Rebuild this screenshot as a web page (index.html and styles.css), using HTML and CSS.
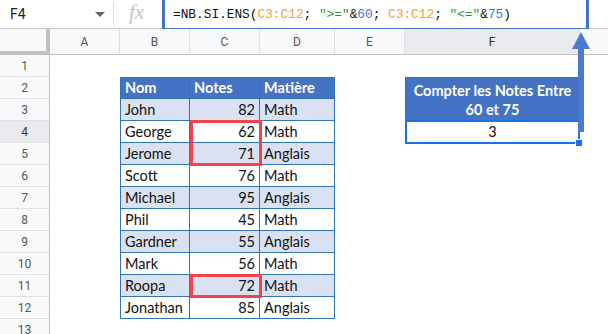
FILE: index.html
```html
<!DOCTYPE html>
<html lang="fr">
<head>
  <meta charset="UTF-8" />
  <meta name="viewport" content="width=device-width, initial-scale=1.0" />
  <title>NB.SI.ENS entre deux valeurs</title>
  <link rel="stylesheet" href="styles.css">
</head>
<body>
  <div class="app">
    <div class="formula-bar">
      <div class="name-box"><span>F4</span><span class="caret"></span></div>
      <div class="fx">fx</div>
      <div class="formula">=NB.SI.ENS(<span class="rng">C3:C12</span>; <span class="str">"&gt;="</span>&amp;<span class="num">60</span>; <span class="rng">C3:C12</span>; <span class="str">"&lt;="</span>&amp;<span class="num">75</span>)</div>
    </div>
    <div class="formula-mark"></div>

    <div class="sheet">
      <div class="corner"></div>
      <div class="col-hd">A</div>
      <div class="col-hd">B</div>
      <div class="col-hd">C</div>
      <div class="col-hd">D</div>
      <div class="col-hd">E</div>
      <div class="col-hd active">F</div>
      <div class="col-hd last"></div>

      <!-- 1 -->
      <div class="row-hd">1</div>
      <div></div><div></div><div></div><div></div><div></div><div></div><div></div>

      <!-- 2 -->
      <div class="row-hd">2</div>
      <div></div>
      <div class="cell th first top">Nom</div>
      <div class="cell th top">Notes</div>
      <div class="cell th top">Matière</div>
      <div></div>
      <div class="cell th big first top">Compter les Notes Entre<br>60 et 75</div>
      <div></div>

      <!-- 3 -->
      <div class="row-hd">3</div>
      <div></div>
      <div class="cell band first">John</div>
      <div class="cell band num">82</div>
      <div class="cell band">Math</div>
      <div></div>
      <div></div>

      <!-- 4 -->
      <div class="row-hd active">4</div>
      <div></div>
      <div class="cell first">George</div>
      <div class="cell num">62</div>
      <div class="cell">Math</div>
      <div></div>
      <div class="cell result first">3</div>
      <div></div>

      <!-- 5 -->
      <div class="row-hd">5</div>
      <div></div>
      <div class="cell band first">Jerome</div>
      <div class="cell band num">71</div>
      <div class="cell band">Anglais</div>
      <div></div><div></div><div></div>

      <!-- 6 -->
      <div class="row-hd">6</div>
      <div></div>
      <div class="cell first">Scott</div>
      <div class="cell num">76</div>
      <div class="cell">Math</div>
      <div></div><div></div><div></div>

      <!-- 7 -->
      <div class="row-hd">7</div>
      <div></div>
      <div class="cell band first">Michael</div>
      <div class="cell band num">95</div>
      <div class="cell band">Anglais</div>
      <div></div><div></div><div></div>

      <!-- 8 -->
      <div class="row-hd">8</div>
      <div></div>
      <div class="cell first">Phil</div>
      <div class="cell num">45</div>
      <div class="cell">Math</div>
      <div></div><div></div><div></div>

      <!-- 9 -->
      <div class="row-hd">9</div>
      <div></div>
      <div class="cell band first">Gardner</div>
      <div class="cell band num">55</div>
      <div class="cell band">Anglais</div>
      <div></div><div></div><div></div>

      <!-- 10 -->
      <div class="row-hd">10</div>
      <div></div>
      <div class="cell first">Mark</div>
      <div class="cell num">56</div>
      <div class="cell">Math</div>
      <div></div><div></div><div></div>

      <!-- 11 -->
      <div class="row-hd">11</div>
      <div></div>
      <div class="cell band first">Roopa</div>
      <div class="cell band num">72</div>
      <div class="cell band">Math</div>
      <div></div><div></div><div></div>

      <!-- 12 -->
      <div class="row-hd">12</div>
      <div></div>
      <div class="cell first">Jonathan</div>
      <div class="cell num">85</div>
      <div class="cell">Anglais</div>
      <div></div><div></div><div></div>

      <!-- 13 -->
      <div class="row-hd">13</div>
      <div></div><div></div><div></div><div></div><div></div><div></div><div></div>

      <!-- annotations over the grid -->
      <div class="mark mark-c4"></div>
      <div class="mark mark-c11"></div>
      <div class="selection"><span class="handle"></span></div>
    </div>

    <svg class="arrow" width="24" height="100" viewBox="0 0 24 100">
      <rect x="8" y="16" width="6" height="84" fill="#4a7bd0" />
      <polygon points="2,17 11,0 20,17" fill="#4a7bd0" />
    </svg>
  </div>
</body>
</html>
```

FILE: styles.css
```css
* {
  box-sizing: border-box;
}
body {
  margin: 0;
  background: #fff;
  font-family: Roboto, "Liberation Sans", sans-serif;
}
.app {
  position: relative;
  width: 608px;
  height: 334px;
  overflow: hidden;
}

/* formula bar */
.formula-bar {
  display: flex;
  align-items: center;
  height: 29px;
  border-bottom: 1px solid #c4c7c5;
}
.name-box {
  width: 114px;
  height: 24px;
  padding-left: 10px;
  display: flex;
  align-items: center;
  justify-content: space-between;
  border-right: 1px solid #e0e0e0;
  font-size: 14px;
  color: #222;
}
.caret {
  width: 0;
  height: 0;
  margin-right: 8px;
  border-left: 5px solid transparent;
  border-right: 5px solid transparent;
  border-top: 5px solid #666;
}
.fx {
  width: 49px;
  padding-left: 15px;
  font-family: "Liberation Serif", serif;
  font-style: italic;
  font-size: 21px;
  color: #c4c4c4;
  margin-top: -3px;
}
.formula {
  padding-left: 10px;
  font-family: "Liberation Mono", monospace;
  font-size: 12.8px;
  color: #111;
  white-space: pre;
}
.rng { color: #f5a131; }
.str { color: #1f9a37; }
.num { color: #3d78d8; }
.formula-mark {
  position: absolute;
  left: 162px;
  top: -3px;
  width: 427px;
  height: 34px;
  border: 3px solid #4472c4;
}

/* sheet grid */
.sheet {
  position: relative;
  display: grid;
  grid-template-columns: 50px 70px 70px 70px 75px 70px 175px 1fr;
  grid-template-rows: 26px repeat(13, 22px);
}
.corner {
  background: #f8f9fa;
  border-right: 4px solid #c0c0c0;
  border-bottom: 4px solid #c0c0c0;
}
.col-hd {
  display: flex;
  align-items: center;
  justify-content: center;
  background: #f8f9fa;
  border-right: 1px solid #e0e0e0;
  border-bottom: 1px solid #c0c0c0;
  font-size: 12px;
  color: #555;
}
.col-hd.active { background: #e8eaed; color: #333; }
.col-hd.last { border-right: none; }
.row-hd {
  display: flex;
  align-items: center;
  justify-content: center;
  background: #f8f9fa;
  border-right: 1px solid #c0c0c0;
  border-bottom: 1px solid #e0e0e0;
  font-size: 12px;
  color: #555;
}
.row-hd.active { background: #e8eaed; color: #333; }

/* data table */
.cell {
  display: flex;
  align-items: flex-end;
  padding: 0 4px 1px;
  border-right: 1px solid #2f75b5;
  border-bottom: 1px solid #2f75b5;
  font-family: Lato, "Open Sans", sans-serif;
  font-size: 14.5px;
  line-height: 19px;
  color: #111;
  white-space: nowrap;
}
.cell.first { border-left: 1px solid #2f75b5; }
.cell.top { border-top: 1px solid #2f75b5; }
.cell.band { background: #d9e1f2; }
.cell.num { justify-content: flex-end; }
.th {
  background: #4472c4;
  color: #fff;
  font-weight: bold;
}
.th.big {
  grid-row: span 2;
  justify-content: center;
  align-items: center;
  text-align: center;
  white-space: normal;
  font-size: 14.5px;
  line-height: 19px;
  padding-top: 3px;
}
.cell.result {
  justify-content: center;
  border-color: #1a73e8;
}

/* annotations */
.mark {
  position: absolute;
  inset: -1px -2px -1px 0;
  border: 3px solid #f4434b;
}
.mark-c4 { grid-column: 4 / 5; grid-row: 5 / 7; }
.mark-c11 { grid-column: 4 / 5; grid-row: 12 / 13; }
.selection {
  position: absolute;
  grid-column: 7 / 8;
  grid-row: 5 / 6;
  inset: -1px 0 -1px 0;
  border: 2px solid #1a73e8;
}
.handle {
  position: absolute;
  right: -5px;
  bottom: -5px;
  width: 8px;
  height: 8px;
  background: #1a73e8;
  border: 1px solid #fff;
}
.arrow {
  position: absolute;
  left: 570px;
  top: 32px;
}
```
